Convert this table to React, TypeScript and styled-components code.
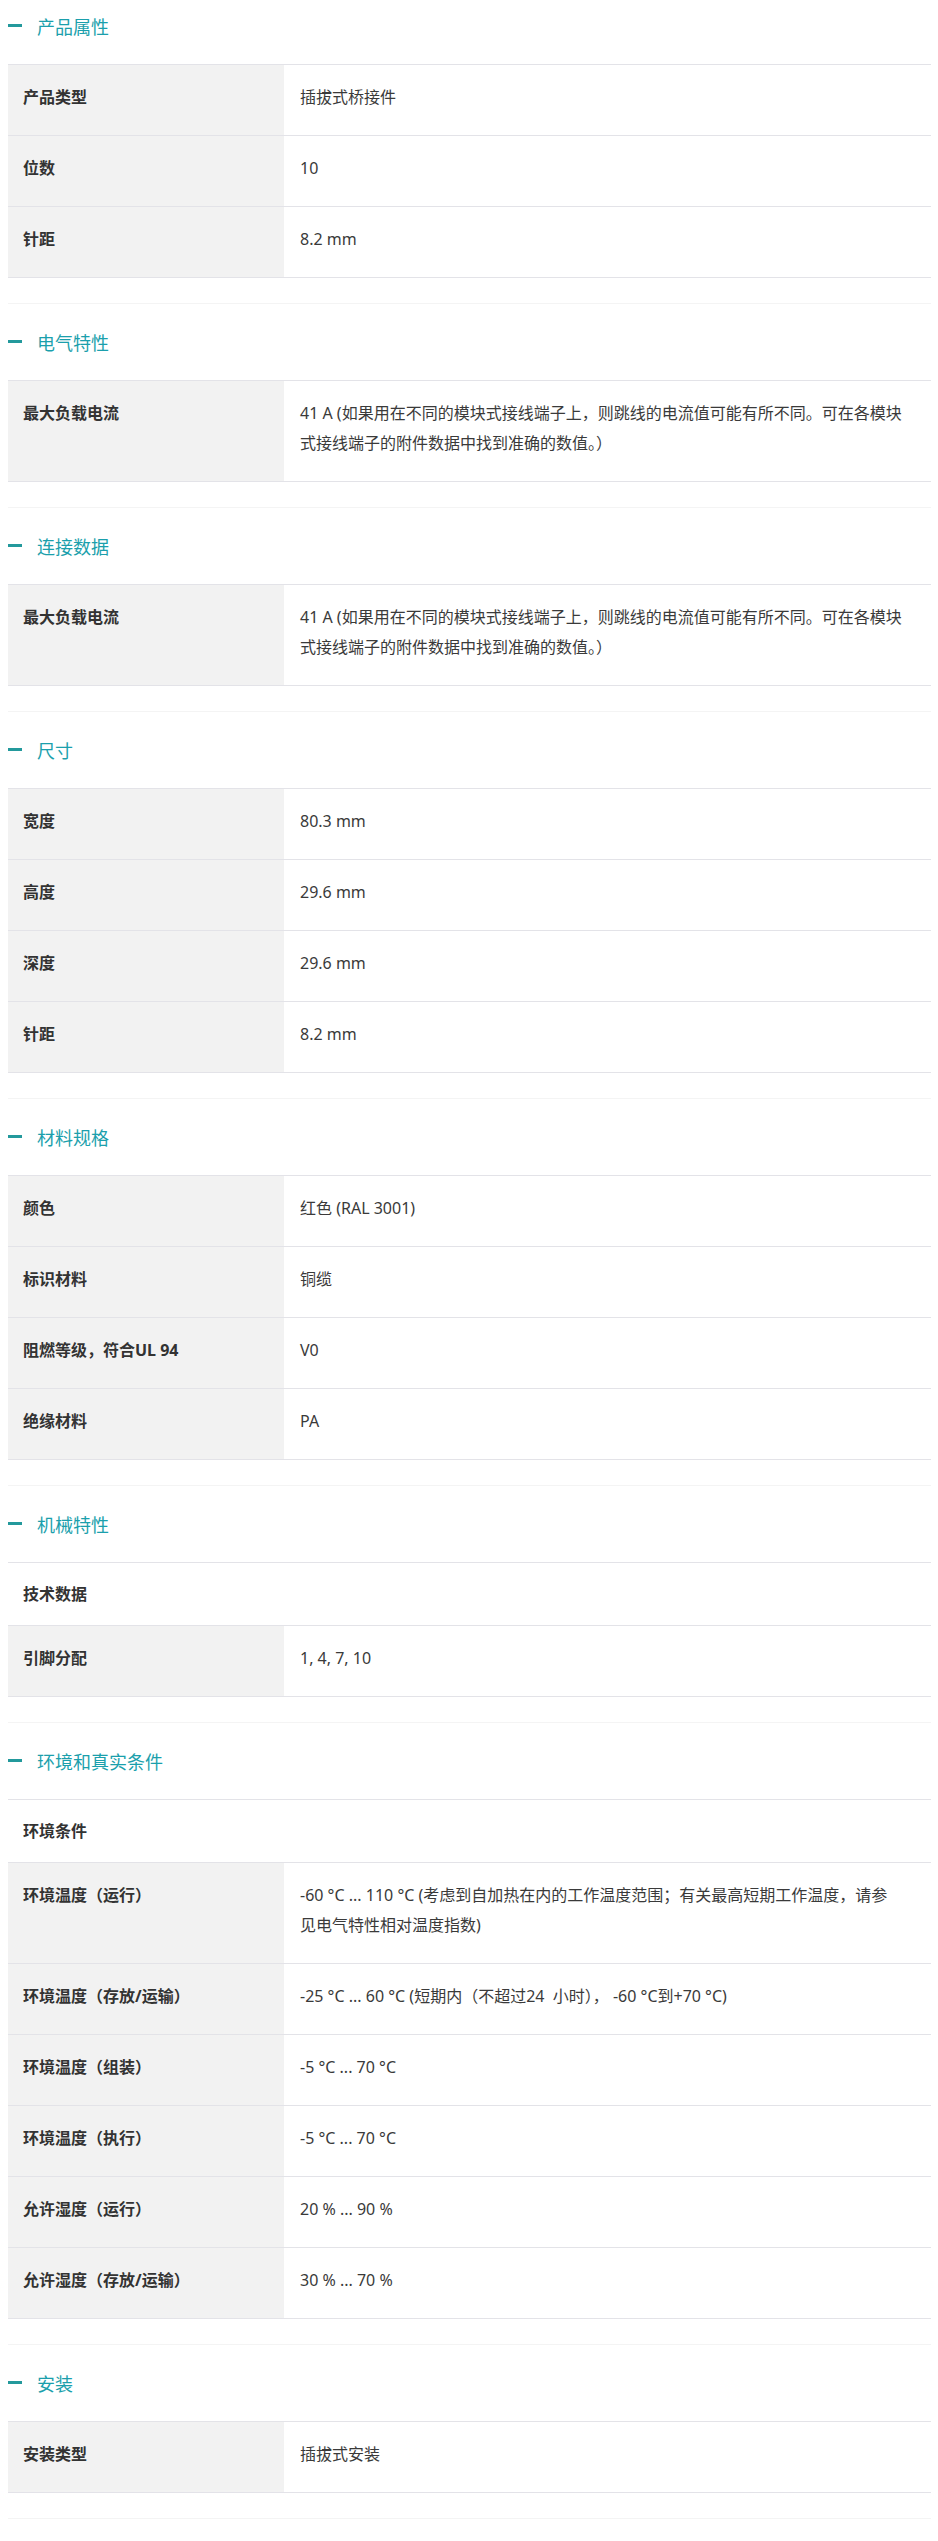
import React from 'react';
import styled, { createGlobalStyle } from 'styled-components';

const GlobalStyle = createGlobalStyle`
  body {
    margin: 0;
    background: #ffffff;
    font-family: 'Noto Sans', 'Noto Sans CJK SC', sans-serif;
    color: #333333;
  }
`;

const Page = styled.div`
  padding: 0 7px 24px 8px;
`;

const Section = styled.section<{ $first?: boolean }>`
  padding: ${(p) => (p.$first ? '15px' : '27px')} 0 25px;
  border-bottom: 1px solid #f4f4f4;
`;

const SectionHeader = styled.h3`
  display: flex;
  align-items: center;
  gap: 15px;
  margin: 0 0 25px;
  height: 24px;
  font-size: 18px;
  font-weight: 400;
  line-height: 24px;
  color: #1b9fac;
`;

const Dash = styled.span`
  display: block;
  width: 14px;
  height: 3px;
  margin-bottom: 4px;
  background: #23999c;
`;

const Table = styled.table`
  width: 100%;
  border-collapse: collapse;
  table-layout: fixed;
`;

const LabelCol = styled.col`
  width: 276px;
`;

const Row = styled.tr`
  border-top: 1px solid #e3e3e8;
  border-bottom: 1px solid #e3e3e8;
`;

const LabelCell = styled.th`
  padding: 17px 15px 23px;
  background: #f2f2f2;
  text-align: left;
  vertical-align: top;
  font-size: 16px;
  font-weight: 700;
  line-height: 30px;
  color: #333333;
`;

const ValueCell = styled.td`
  padding: 17px 16px 23px;
  vertical-align: top;
  font-size: 16px;
  line-height: 30px;
  color: #3a3a3a;
`;

const Line = styled.span`
  display: block;
`;

const SubHeadCell = styled.th`
  padding: 16px 15px;
  text-align: left;
  font-size: 16px;
  font-weight: 700;
  line-height: 30px;
  color: #333333;
`;

type Item = { label: string; value?: string | string[]; sub?: boolean };
type Group = { title: string; items: Item[] };

const tolerance = [
  '41 A (如果用在不同的模块式接线端子上，则跳线的电流值可能有所不同。可在各模块',
  '式接线端子的附件数据中找到准确的数值。）',
];

const groups: Group[] = [
  {
    title: '产品属性',
    items: [
      { label: '产品类型', value: '插拔式桥接件' },
      { label: '位数', value: '10' },
      { label: '针距', value: '8.2 mm' },
    ],
  },
  { title: '电气特性', items: [{ label: '最大负载电流', value: tolerance }] },
  { title: '连接数据', items: [{ label: '最大负载电流', value: tolerance }] },
  {
    title: '尺寸',
    items: [
      { label: '宽度', value: '80.3 mm' },
      { label: '高度', value: '29.6 mm' },
      { label: '深度', value: '29.6 mm' },
      { label: '针距', value: '8.2 mm' },
    ],
  },
  {
    title: '材料规格',
    items: [
      { label: '颜色', value: '红色 (RAL 3001)' },
      { label: '标识材料', value: '铜缆' },
      { label: '阻燃等级，符合UL 94', value: 'V0' },
      { label: '绝缘材料', value: 'PA' },
    ],
  },
  {
    title: '机械特性',
    items: [
      { label: '技术数据', sub: true },
      { label: '引脚分配', value: '1, 4, 7, 10' },
    ],
  },
  {
    title: '环境和真实条件',
    items: [
      { label: '环境条件', sub: true },
      {
        label: '环境温度（运行）',
        value: [
          '-60 °C ... 110 °C (考虑到自加热在内的工作温度范围；有关最高短期工作温度，请参',
          '见电气特性相对温度指数)',
        ],
      },
      {
        label: '环境温度（存放/运输）',
        value: '-25 °C ... 60 °C (短期内（不超过24\u00a0\u00a0小时），\u00a0-60 °C到+70 °C)',
      },
      { label: '环境温度（组装）', value: '-5 °C ... 70 °C' },
      { label: '环境温度（执行）', value: '-5 °C ... 70 °C' },
      { label: '允许湿度（运行）', value: '20 % ... 90 %' },
      { label: '允许湿度（存放/运输）', value: '30 % ... 70 %' },
    ],
  },
  { title: '安装', items: [{ label: '安装类型', value: '插拔式安装' }] },
];

const renderValue = (v?: string | string[]) =>
  Array.isArray(v) ? v.map((line) => <Line key={line}>{line}</Line>) : v;

const App: React.FC = () => (
  <>
    <GlobalStyle />
    <Page>
      {groups.map((g, gi) => (
        <Section key={g.title} $first={gi === 0}>
          <SectionHeader>
            <Dash />
            {g.title}
          </SectionHeader>
          <Table>
            <colgroup>
              <LabelCol />
              <col />
            </colgroup>
            <tbody>
              {g.items.map((it, i) =>
                it.sub ? (
                  <Row key={i}>
                    <SubHeadCell colSpan={2}>{it.label}</SubHeadCell>
                  </Row>
                ) : (
                  <Row key={i}>
                    <LabelCell>{it.label}</LabelCell>
                    <ValueCell>{renderValue(it.value)}</ValueCell>
                  </Row>
                )
              )}
            </tbody>
          </Table>
        </Section>
      ))}
    </Page>
  </>
);

export default App;
